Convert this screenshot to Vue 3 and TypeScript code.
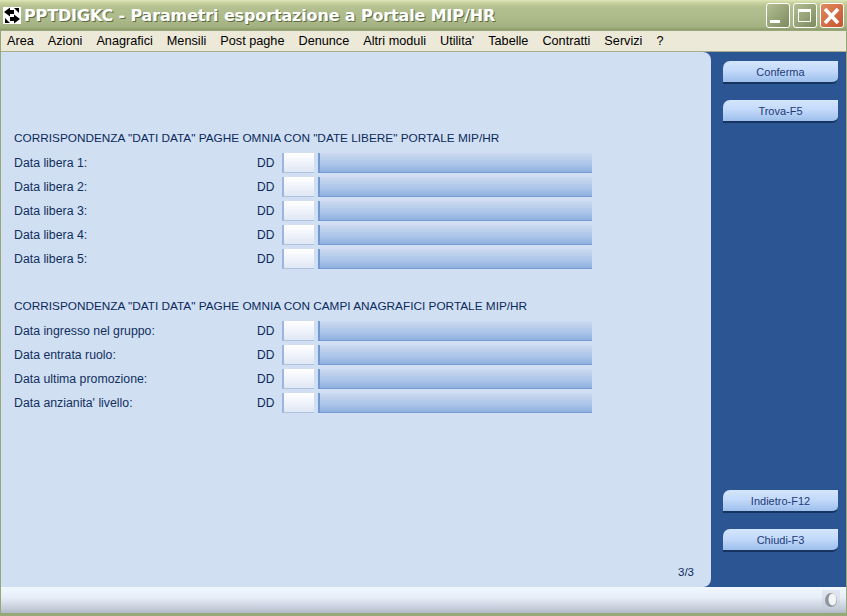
<script setup lang="ts">
const menu: string[] = ['Area', 'Azioni', 'Anagrafici', 'Mensili', 'Post paghe', 'Denunce', 'Altri moduli', "Utilita'", 'Tabelle', 'Contratti', 'Servizi', '?']
const groups = [
  {
    title: 'CORRISPONDENZA "DATI DATA" PAGHE OMNIA CON "DATE LIBERE" PORTALE MIP/HR',
    rows: ['Data libera 1:', 'Data libera 2:', 'Data libera 3:', 'Data libera 4:', 'Data libera 5:'],
  },
  {
    title: 'CORRISPONDENZA "DATI DATA" PAGHE OMNIA CON CAMPI ANAGRAFICI PORTALE MIP/HR',
    rows: ['Data ingresso nel gruppo:', 'Data entrata ruolo:', 'Data ultima promozione:', "Data anzianita' livello:"],
  },
]
</script>

<template>
  <div class="window">
    <header class="titlebar">
      <svg class="appicon" width="18" height="17" viewBox="0 0 18 17">
        <rect width="18" height="17" fill="#fff" />
        <path d="M1 5 L7 0.5 L7 3 L11 3 L11 7 L7 7 L7 9.5 Z M17 12 L11 16.5 L11 14 L7 14 L7 10 L11 10 L11 7.5 Z" fill="#000" />
        <path d="M11 1 L16 1 L16 6 Z M2 11 L2 16 L7 16 Z" fill="#000" />
      </svg>
      <span class="title">PPTDIGKC - Parametri esportazione a Portale MIP/HR</span>
      <div class="controls">
        <span class="ctl">
          <svg width="22" height="23" viewBox="0 0 22 23"><rect x="3" y="16" width="10" height="3" fill="#fff" /></svg>
        </span>
        <span class="ctl">
          <svg width="22" height="23" viewBox="0 0 22 23"><path d="M4.5 5.5h12v12h-12z" fill="none" stroke="#fff" /><rect x="4" y="5" width="13" height="3" fill="#fff" /></svg>
        </span>
        <span class="ctl close">
          <svg width="22" height="23" viewBox="0 0 22 23"><path d="M4 5 L17 19 M17 5 L4 19" stroke="#fff" stroke-width="3.6" /></svg>
        </span>
      </div>
    </header>

    <nav class="menubar">
      <span v-for="m in menu" :key="m" class="menuitem">{{ m }}</span>
    </nav>

    <div class="body">
      <main class="content">
        <section v-for="g in groups" :key="g.title" class="group">
          <h2 class="heading">{{ g.title }}</h2>
          <div v-for="r in g.rows" :key="r" class="row">
            <span class="label">{{ r }}</span>
            <span class="dd">DD</span>
            <span class="small"></span>
            <span class="big"></span>
          </div>
        </section>
        <div class="page">3/3</div>
      </main>
      <aside class="side">
        <div class="btns">
          <button class="btn">Conferma</button>
          <button class="btn">Trova-F5</button>
        </div>
        <div class="btns">
          <button class="btn">Indietro-F12</button>
          <button class="btn">Chiudi-F3</button>
        </div>
      </aside>
    </div>

    <footer class="status">
      <svg width="18" height="20" viewBox="0 0 18 20">
        <rect width="18" height="20" fill="#c3cad6" opacity=".35" />
        <ellipse cx="9" cy="10" rx="6" ry="7" fill="#8e959f" />
        <ellipse cx="10.5" cy="9.5" rx="4" ry="6" fill="#f2f4f6" />
      </svg>
    </footer>
  </div>
</template>

<style>
html, body { margin: 0; padding: 0; overflow: hidden; }
</style>

<style scoped>
.window {
  width: 847px;
  height: 616px;
  box-sizing: border-box;
  display: flex;
  flex-direction: column;
  background: #97a878;
  padding: 0 1px 3px 1px;
  font-family: "Liberation Sans", Arial, sans-serif;
  overflow: hidden;
}
.titlebar {
  height: 30px;
  margin: 0 -1px;
  flex: none;
  display: flex;
  align-items: center;
  padding: 0 3px;
  background: linear-gradient(#dfe6b8 0, #c6d09c 3px, #b4c08f 7px, #abb888 20px, #a3b07f 27px, #8d9b6b 30px);
}
.appicon { flex: none; }
.title {
  margin-left: 3px;
  font-family: "DejaVu Sans", sans-serif;
  font-weight: 700;
  font-size: 16px;
  letter-spacing: -0.14px;
  color: #fff;
  white-space: nowrap;
  text-shadow: 1px 1px 0 #5d6a42;
}
.controls { margin-left: auto; display: flex; gap: 3px; }
.ctl {
  width: 24px;
  height: 25px;
  box-sizing: border-box;
  border: 1px solid #fff;
  border-radius: 3px;
  background: linear-gradient(135deg, #b3bf92, #7d8b5e);
  display: block;
}
.ctl svg { display: block; }
.close { background: linear-gradient(135deg, #e08a60, #c9532c); }
.menubar {
  height: 20px;
  flex: none;
  margin-top: 1px;
  display: flex;
  align-items: center;
  padding-left: 6px;
  gap: 14px;
  background: #ece9d8;
  border-bottom: 1px solid #a7ad88;
  font-size: 12.7px;
  color: #000;
}
.menuitem { white-space: nowrap; }
.body {
  flex: 1;
  display: flex;
  min-height: 0;
  background: #2c5594;
}
.content {
  width: 711px;
  box-sizing: border-box;
  background: #d1dff2;
  border-radius: 0 8px 8px 0;
  padding: 78px 0 0 13px;
  position: relative;
  display: flex;
  flex-direction: column;
  gap: 27px;
}
.group { display: flex; flex-direction: column; }
.heading {
  margin: 0 0 5px;
  font-weight: 400;
  font-size: 11.8px;
  line-height: 16px;
  color: #0a2a5c;
  white-space: nowrap;
}
.row {
  height: 24px;
  display: flex;
  align-items: center;
  font-size: 12.3px;
  color: #10305f;
}
.label { width: 243px; flex: none; white-space: nowrap; }
.dd { width: 25px; flex: none; font-size: 12px; color: #0a2a5c; }
.small {
  width: 32px;
  height: 20px;
  box-sizing: border-box;
  flex: none;
  border-left: 2px solid #9db4dc;
  border-bottom: 1px solid #b0c2e2;
  background: linear-gradient(#ffffff, #dfe7f6);
}
.big {
  width: 274px;
  height: 20px;
  margin-left: 4px;
  box-sizing: border-box;
  flex: none;
  border-left: 2px solid #7397d2;
  border-bottom: 1px solid #7a9cd6;
  background: linear-gradient(#cbdaf0, #abc4ea 60%, #8fb0e2);
}
.page {
  position: absolute;
  right: 17px;
  bottom: 9px;
  font-size: 11.5px;
  color: #0a2a5c;
}
.side {
  flex: 1;
  display: flex;
  flex-direction: column;
  justify-content: space-between;
  padding: 9px 8px 35px 12px;
}
.btns { display: flex; flex-direction: column; gap: 16px; }
.btn {
  width: 115px;
  height: 23px;
  padding: 0;
  box-sizing: border-box;
  border: 0;
  border-bottom: 2px solid #17335f;
  border-radius: 7px 0 6px 0;
  background: linear-gradient(#d4e6fc, #c4dafa 45%, #9dbfec);
  font-family: "Liberation Sans", Arial, sans-serif;
  font-size: 11px;
  color: #1d3b7a;
}
.status {
  height: 26px;
  flex: none;
  display: flex;
  align-items: center;
  justify-content: flex-end;
  padding-right: 6px;
  background: linear-gradient(#f1f7ff, #e8eef8 40%, #c3cad8 85%, #b1b9c6);
}
</style>
